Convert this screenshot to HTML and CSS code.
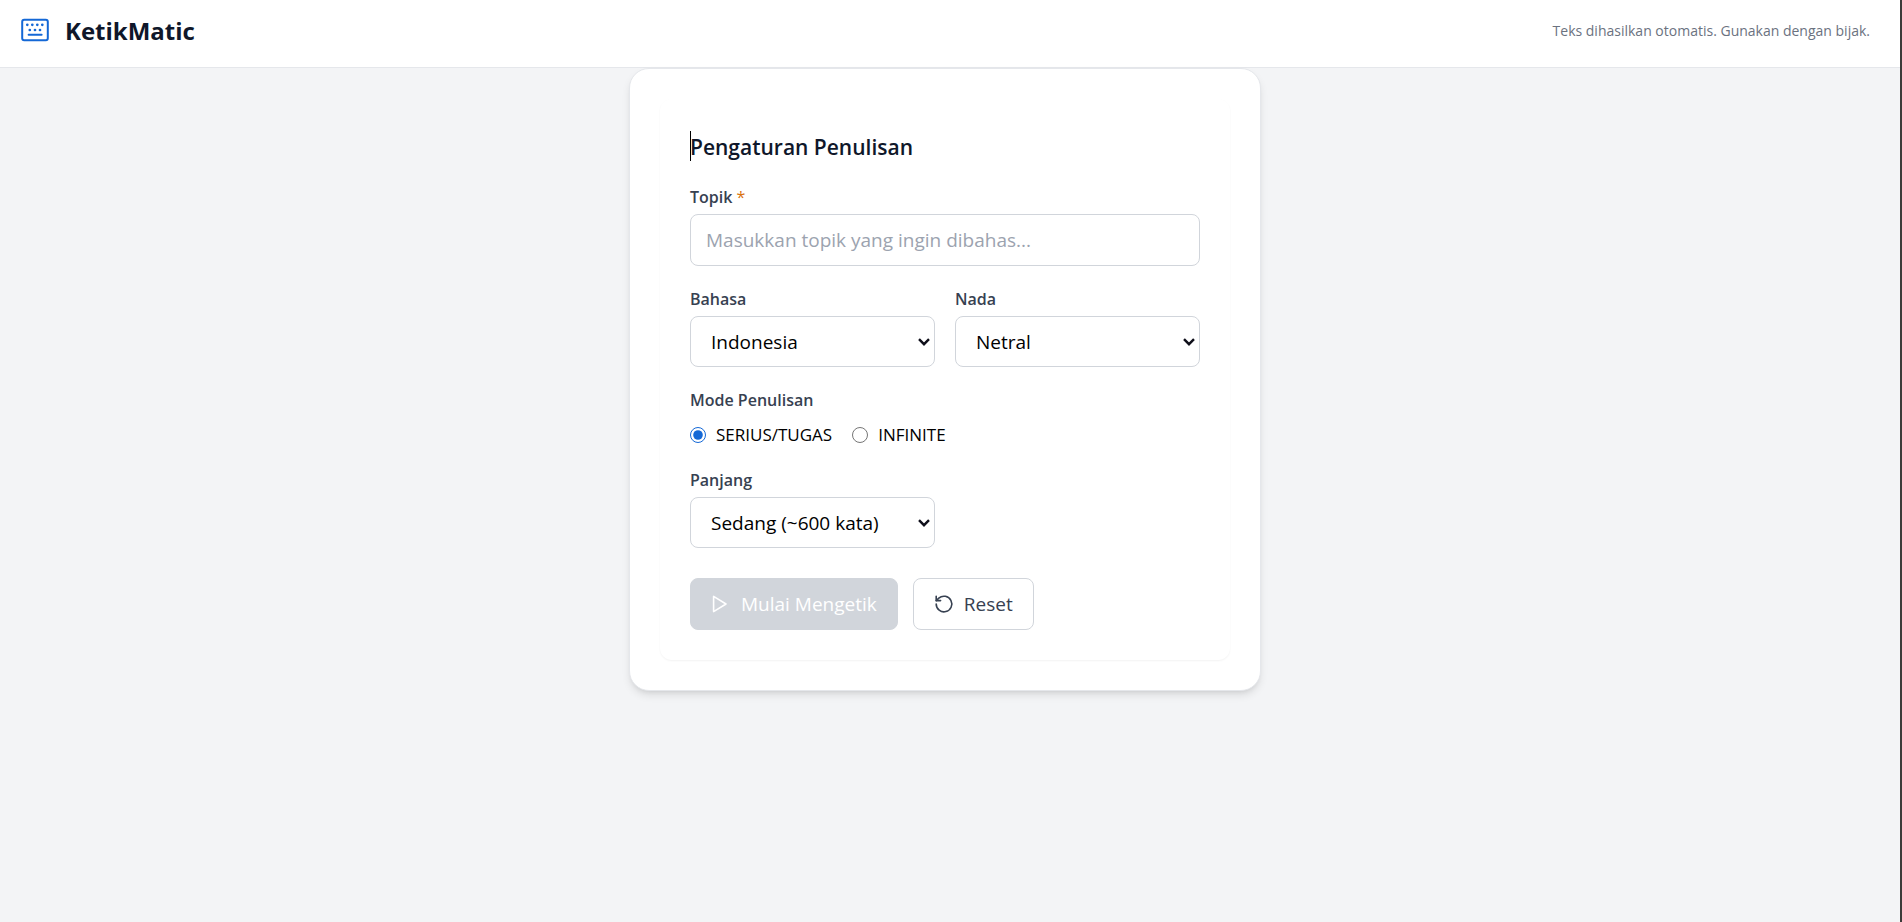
FILE: index.html
```html
<!DOCTYPE html>
<html lang="id">
<head>
  <meta charset="UTF-8" />
  <meta name="viewport" content="width=device-width, initial-scale=1.0"/>
  <title>KetikMatic</title>
  <link rel="stylesheet" href="styles.css">
</head>
<body>

  <header class="site-header">
    <div class="brand">
      <svg class="brand-icon" viewBox="0 0 30 29" fill="none" stroke="currentColor" stroke-width="2" stroke-linecap="round" aria-hidden="true">
        <rect x="2.2" y="3.7" width="25.6" height="20.6" rx="2"/>
        <path d="M8.6 18.8h13"/>
        <path d="M7.3 8.8h.01M12.3 8.8h.01M17.3 8.8h.01M22.3 8.8h.01M9.8 14h.01M15 14h.01M20 14h.01" stroke-width="2.7"/>
      </svg>
      <h1>KetikMatic</h1>
    </div>
    <p class="notice">Teks dihasilkan otomatis. Gunakan dengan bijak.</p>
  </header>

  <main class="page">
    <div class="card">
      <form class="settings">
        <h2>Pengaturan Penulisan</h2>

        <div class="field">
          <label for="topik">Topik <span class="required">*</span></label>
          <input type="text" id="topik" placeholder="Masukkan topik yang ingin dibahas..." required />
        </div>

        <div class="row">
          <div class="field">
            <label for="bahasa">Bahasa</label>
            <select id="bahasa">
              <option>Indonesia</option>
              <option>English</option>
            </select>
          </div>
          <div class="field">
            <label for="nada">Nada</label>
            <select id="nada">
              <option>Netral</option>
              <option>Formal</option>
              <option>Santai</option>
            </select>
          </div>
        </div>

        <fieldset class="modes">
          <legend>Mode Penulisan</legend>
          <div class="mode-list">
            <label><input type="radio" name="mode" value="serius" checked /> SERIUS/TUGAS</label>
            <label><input type="radio" name="mode" value="infinite" /> INFINITE</label>
          </div>
        </fieldset>

        <div class="row">
          <div class="field">
            <label for="panjang">Panjang</label>
            <select id="panjang">
              <option>Sedang (~600 kata)</option>
            </select>
          </div>
        </div>

        <div class="actions">
          <button type="submit" class="btn btn-start" disabled>
            <svg viewBox="0 0 20 20" fill="none" stroke="currentColor" stroke-width="1.6" stroke-linejoin="round" aria-hidden="true">
              <path d="M2.6 2.4v15.2L15 10z"/>
            </svg>
            Mulai Mengetik
          </button>
          <button type="reset" class="btn btn-reset">
            <svg viewBox="0 0 20 20" fill="none" stroke="currentColor" stroke-width="1.6" stroke-linecap="round" stroke-linejoin="round" aria-hidden="true">
              <path d="M2.2 10a7.8 7.8 0 1 0 2.6-5.8L2.2 6.6"/>
              <path d="M2.2 2.2v4.4h4.4"/>
            </svg>
            Reset
          </button>
        </div>
      </form>
    </div>
  </main>

</body>
</html>
```

FILE: styles.css
```css
* { box-sizing: border-box; }
html { min-height: 100%; display: flex; flex-direction: column; }
body { flex: 1; margin: 0; background: #f3f4f6; color: #0f172a; font-family: "Open Sans", "Noto Sans", sans-serif; font-size: 19px; line-height: 25px; border-right: 2px solid #3b3b39; }

.site-header { display: flex; justify-content: space-between; align-items: center; padding: 13px 30px 19px 20px; background: #fff; border-bottom: 1px solid #e5e7eb; }
.brand { display: flex; align-items: center; gap: 15px; }
.brand-icon { width: 30px; height: 29px; color: #1468d6; }
.brand h1 { margin: 0; font-size: 24px; line-height: 35px; font-weight: 700; }
.notice { margin: 0; font-size: 14px; color: #6b7280; }

.page { padding-right: 10px; }
.card { max-width: 632px; margin: 0 auto; padding: 30px; background: #fff; border: 1px solid #e5e7eb; border-radius: 20px; box-shadow: 0 5px 8px -1px rgba(0, 0, 0, 0.1), 0 3px 5px -3px rgba(0, 0, 0, 0.1); }

.settings { display: flex; flex-direction: column; gap: 20px; padding: 30px; border-radius: 12px; box-shadow: 0 1px 2px rgba(0, 0, 0, 0.05); }
.settings h2 { position: relative; margin: 0 0 -2px; font-size: 21px; line-height: 37px; font-weight: 600; }
/* text cursor in front of the heading */
.settings h2::before { content: ""; position: absolute; left: 0; top: 2px; width: 1px; height: 30px; background: #000; }

.row { display: grid; grid-template-columns: 1fr 1fr; gap: 20px; }
.field { display: flex; flex-direction: column; gap: 3px; }
.field > label, .modes legend { padding: 0; font-size: 16px; line-height: 27px; font-weight: 600; color: #374151; }
.required { color: #d9730d; font-weight: 400; }

.field input, .field select { width: 100%; margin: 0; background-color: #fff; border: 1px solid #d1d5db; border-radius: 8px; font-family: inherit; font-size: 19px; }
.field input { height: 52px; padding: 0 15px; color: #0f172a; }
.field input::placeholder { color: #9ca3af; }
.field select { height: 51px; padding: 0 30px 0 20px; color: #000; appearance: none; background-image: url("data:image/svg+xml,%3Csvg xmlns='http://www.w3.org/2000/svg' width='12' height='8' fill='none' stroke='%230f0f1a' stroke-width='2.4'%3E%3Cpath d='M1 1.2l5 5 5-5'/%3E%3C/svg%3E"); background-repeat: no-repeat; background-position: right 4px center; }

.modes { margin: 0; padding: 0; border: none; }
.mode-list { display: flex; gap: 20px; padding-top: 8px; }
.mode-list label { display: flex; align-items: center; gap: 10px; font-size: 17px; color: #000; }
.mode-list input { width: 16px; height: 16px; margin: 0; accent-color: #1468d6; }

.actions { display: flex; gap: 15px; padding-top: 10px; }
.btn { display: flex; align-items: center; gap: 10px; height: 52px; padding: 0 20px; border: 1px solid #d1d5db; border-radius: 8px; font-family: inherit; font-size: 19px; cursor: pointer; }
.btn svg { width: 20px; height: 20px; }
.btn-start { background: #d1d5db; color: #fff; cursor: not-allowed; }
.btn-reset { background: #fff; color: #374151; }
```
